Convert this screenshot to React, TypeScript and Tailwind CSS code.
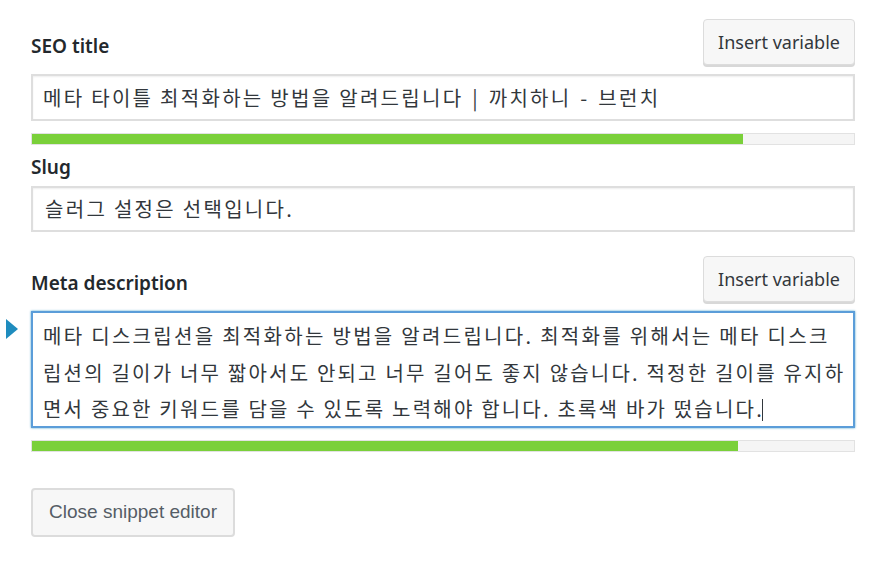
import React from 'react';

const label = "text-[19px] font-semibold text-[#23282d] leading-[24px] [font-family:'Noto_Sans',sans-serif]";
const ko = "[font-family:'Noto_Sans_CJK_KR',sans-serif] text-[20px] tracking-[2.3px] text-[#32373c]";

function InsertButton() {
  return (
    <button className="h-[46px] w-[152px] rounded-[4px] border border-[#dcdcdc] bg-[#f7f7f7] text-[18px] text-[#32373c] shadow-[0_2px_0_#d8d8d8] [font-family:'Noto_Sans',sans-serif]">
      Insert variable
    </button>
  );
}

function Progress({ pct }: { pct: number }) {
  return (
    <div className="h-[12px] w-full border border-[#e2e2e2] bg-[#f5f5f5]">
      <div className="h-full bg-[#7ad03a]" style={{ width: pct + '%' }} />
    </div>
  );
}

export default function App() {
  return (
    <div className="relative h-[572px] w-[885px] bg-white pl-[31px] pr-[30px] pt-[19px]">
      {/* SEO title */}
      <div className="flex items-end justify-between">
        <span className={label + ' mb-[7px]'}>SEO title</span>
        <InsertButton />
      </div>
      <div className="mt-[9px] flex h-[47px] items-center border-2 border-[#dedede] px-[10px] shadow-[inset_0_1px_2px_rgba(0,0,0,0.07)]">
        <span className={ko}>
          메타 타이틀 최적화하는 방법을 알려드립니다 <span className="mx-[2px]">|</span> 까치하니 <span className="mx-[2px]">-</span> 브런치
        </span>
      </div>
      <div className="mt-[12px]">
        <Progress pct={86.5} />
      </div>

      {/* Slug */}
      <div className={label + ' mt-[10px]'}>Slug</div>
      <div className="mt-[7px] flex h-[46px] items-center border-2 border-[#dedede] px-[12px] shadow-[inset_0_1px_2px_rgba(0,0,0,0.07)]">
        <span className={ko}>슬러그 설정은 선택입니다.</span>
      </div>

      {/* Meta description */}
      <div className="mt-[24px] flex items-end justify-between">
        <span className={label + ' mb-[7px]'}>Meta description</span>
        <InsertButton />
      </div>
      <div className="relative mt-[9px]">
        <svg className="absolute left-[-25px] top-[8px]" width="12" height="20" viewBox="0 0 12 20">
          <polygon points="0,0 12,10 0,20" fill="#1e8cbe" />
        </svg>
        <div className="h-[117px] border-2 border-[#5b9dd9] px-[10px] pt-[5px] shadow-[0_0_2px_rgba(30,140,190,0.8)]">
          <div className={ko + ' leading-[36.5px]'}>
            <div className="whitespace-nowrap">메타 디스크립션을 최적화하는 방법을 알려드립니다. 최적화를 위해서는 메타 디스크</div>
            <div className="whitespace-nowrap tracking-[2.2px]">립션의 길이가 너무 짧아서도 안되고 너무 길어도 좋지 않습니다. 적정한 길이를 유지하</div>
            <div className="whitespace-nowrap tracking-[2.2px]">
              면서 중요한 키워드를 담을 수 있도록 노력해야 합니다. 초록색 바가 떴습니다.
              <span className="ml-[-2px] inline-block h-[22px] w-px translate-y-[4px] bg-[#32373c]" />
            </div>
          </div>
        </div>
      </div>
      <div className="mt-[12px]">
        <Progress pct={85.9} />
      </div>

      <button className="mt-[36px] h-[49px] w-[204px] rounded-[4px] border-2 border-[#dcdcdc] bg-[#f7f7f7] text-[19px] text-[#555d66] [font-family:'Liberation_Sans',Arial,sans-serif]">
        Close snippet editor
      </button>
    </div>
  );
}
